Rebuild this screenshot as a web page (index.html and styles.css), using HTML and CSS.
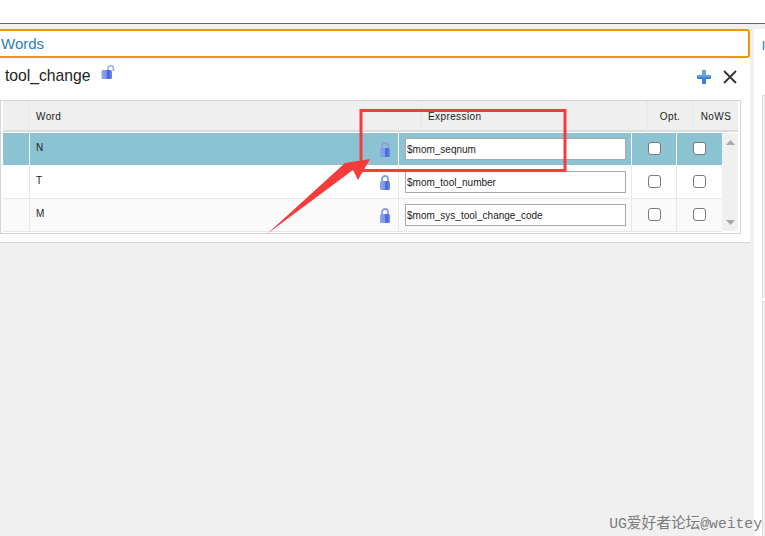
FILE: index.html
```html
<!DOCTYPE html>
<html lang="en">
<head>
<meta charset="utf-8">
<title>Words</title>
<link rel="stylesheet" href="styles.css">
</head>
<body>
<svg class="defs" width="0" height="0"><defs>
  <linearGradient id="lockfill" x1="0" x2="1" y1="0" y2="0"><stop offset="0" stop-color="#8ea4ea"/><stop offset=".45" stop-color="#7f97ea"/><stop offset=".6" stop-color="#3f63e0"/><stop offset="1" stop-color="#6f8ae4"/></linearGradient>
</defs></svg>
<div class="topbar"></div>
<div class="workspace">
  <main class="main">
    <section class="panel">
      <div class="accordion">Words</div>
      <div class="titlebar">
        <div class="title">
          <span class="title-text">tool_change</span>
          <svg class="open-lock" width="14" height="15" viewBox="0 0 14 15"><path d="M7 6V3.500a2.700 2.700 0 0 1 5.400 0V6" fill="none" stroke="#9db0e6" stroke-width="1.600"/><rect x="0.500" y="5" width="10.500" height="9" rx="1.500" fill="url(#lockfill)"/></svg>
        </div>
        <div class="actions">
          <svg width="14" height="14" viewBox="0 0 14 14"><path d="M5 0h4v5h5v4H9v5H5V9H0V5h5z" fill="#3d7fdc"/><path d="M5 0h4v5h5v2H0V5h5z" fill="#62a4ea"/></svg>
          <svg width="14" height="14" viewBox="0 0 14 14"><path d="M1 1l12 12M13 1L1 13" stroke="#333" stroke-width="1.800" fill="none"/></svg>
        </div>
      </div>
      <div class="table">
        <div class="thead">
          <div class="th th-blank"></div>
          <div class="th th-word">Word</div>
          <div class="th th-expr">Expression</div>
          <div class="th th-opt">Opt.</div>
          <div class="th th-nows">NoWS</div>
        </div>
        <div class="tbody">
          <div class="rows">
            <div class="row selected">
              <div class="cell"></div>
              <div class="cell cell-word"><span>N</span><svg class="lock" width="12" height="15" viewBox="0 0 12 15"><path d="M3 7V4a3 3 0 0 1 6 0v3" fill="none" stroke="#8a9de0" stroke-width="1.800"/><rect x="1" y="6" width="10" height="9" rx="1.500" fill="url(#lockfill)"/></svg></div>
              <div class="cell cell-expr"><input class="expr" type="text" value="$mom_seqnum"></div>
              <div class="cell cell-check"><input class="check" type="checkbox"></div>
              <div class="cell cell-check"><input class="check" type="checkbox"></div>
            </div>
            <div class="row">
              <div class="cell"></div>
              <div class="cell cell-word"><span>T</span><svg class="lock" width="12" height="15" viewBox="0 0 12 15"><path d="M3 7V4a3 3 0 0 1 6 0v3" fill="none" stroke="#8a9de0" stroke-width="1.800"/><rect x="1" y="6" width="10" height="9" rx="1.500" fill="url(#lockfill)"/></svg></div>
              <div class="cell cell-expr"><input class="expr" type="text" value="$mom_tool_number"></div>
              <div class="cell cell-check"><input class="check" type="checkbox"></div>
              <div class="cell cell-check"><input class="check" type="checkbox"></div>
            </div>
            <div class="row alt">
              <div class="cell"></div>
              <div class="cell cell-word"><span>M</span><svg class="lock" width="12" height="15" viewBox="0 0 12 15"><path d="M3 7V4a3 3 0 0 1 6 0v3" fill="none" stroke="#8a9de0" stroke-width="1.800"/><rect x="1" y="6" width="10" height="9" rx="1.500" fill="url(#lockfill)"/></svg></div>
              <div class="cell cell-expr"><input class="expr" type="text" value="$mom_sys_tool_change_code"></div>
              <div class="cell cell-check"><input class="check" type="checkbox"></div>
              <div class="cell cell-check"><input class="check" type="checkbox"></div>
            </div>
          </div>
          <div class="scrollbar">
            <svg width="9" height="5" viewBox="0 0 9 5"><path d="M4.500 0L9 5H0z" fill="#a8a8a8"/></svg>
            <svg width="9" height="5" viewBox="0 0 9 5"><path d="M4.500 5L9 0H0z" fill="#a8a8a8"/></svg>
          </div>
        </div>
      </div>
    </section>
  </main>
  <aside class="side">
    <div class="side-letter">l</div>
    <div class="side-box side-box-first"></div>
    <div class="side-box side-box-second"></div>
  </aside>
</div>
<svg class="annotation" width="765" height="536" viewBox="0 0 765 536">
  <rect x="361" y="110.500" width="204" height="60" fill="none" stroke="#f53c3c" stroke-width="3"/>
  <path d="M267 234L345 163L370 159L358 180L353 170Z" fill="#f53c3c"/>
</svg>
<div class="watermark">UG爱好者论坛@weitey</div>
</body>
</html>
```
FILE: styles.css
```css
html, body {
  margin: 0;
  padding: 0;
}
body {
  width: 765px;
  height: 536px;
  overflow: hidden;
  position: relative;
  background: #f0f0f0;
  font-family: "Liberation Sans", Arial, sans-serif;
}
.defs {
  position: absolute;
}
.topbar {
  height: 23px;
  background: #fff;
  border-bottom: 1px solid #666;
}
.workspace {
  display: flex;
  height: 512px;
  padding-top: 5px;
  box-sizing: border-box;
}
.main {
  width: 750px;
  flex: none;
}
.panel {
  background: #fff;
  height: 214px;
  box-sizing: border-box;
  border-bottom: 1px solid #d8d8d8;
}
.accordion {
  height: 29px;
  box-sizing: border-box;
  border: 2px solid #e69c00;
  border-left: 0;
  border-radius: 0 3px 3px 0;
  padding-left: 1px;
  font-size: 15px;
  line-height: 26px;
  color: #2a7fb8;
}
.titlebar {
  display: flex;
  justify-content: space-between;
  height: 42px;
  box-sizing: border-box;
}
.title {
  display: flex;
  align-items: flex-start;
  padding: 9px 0 0 5px;
  gap: 10px;
}
.title-text {
  font-size: 15.700px;
  line-height: 18px;
  color: #222;
}
.open-lock {
  margin-top: -2px;
}
.actions {
  display: flex;
  gap: 12px;
  padding: 12px 13px 0 0;
}
.table {
  width: 741px;
  height: 134px;
  box-sizing: border-box;
  border: 1px solid #d4d4d4;
  padding: 0 2px 2px 2px;
}
.thead {
  display: grid;
  grid-template-columns: 26px 393px 226px 45px 46px;
  height: 31px;
  background: #efefef;
  border-bottom: 2px solid #dcdcdc;
  box-sizing: border-box;
  font-size: 10px;
  color: #222;
}
.th {
  padding-top: 1px;
  padding-bottom: 2px;
  border-right: 1px solid #e6e6e6;
  line-height: 30px;
  letter-spacing: 0.400px;
}
.th-word {
  padding-left: 7px;
}
.th-expr {
  padding-left: 6px;
}
.th-opt,
.th-nows {
  text-align: center;
}
.th-nows {
  border-right: 0;
}
.tbody {
  display: flex;
  height: 99px;
  padding-top: 1px;
  box-sizing: border-box;
}
.rows {
  width: 719px;
}
.scrollbar {
  width: 16px;
  background: #f0f0f0;
  display: flex;
  flex-direction: column;
  justify-content: space-between;
  align-items: center;
  padding: 7px 0 6px;
  box-sizing: border-box;
}
.row {
  display: grid;
  grid-template-columns: 27px 369px 233px 45px 45px;
  height: 33px;
  box-sizing: border-box;
  background: #fff;
  border-bottom: 1px solid #e8e8e8;
  font-size: 10px;
  color: #222;
}
.row.selected {
  background: #8bc3d3;
  border-bottom-color: #fff;
}
.row.alt {
  background: #fafafa;
}
.cell {
  border-right: 1px solid #e8e8e8;
  box-sizing: border-box;
  display: flex;
  align-items: center;
}
.selected .cell {
  border-right-color: #fff;
}
.cell:last-child {
  border-right: 0;
}
.cell-word {
  justify-content: space-between;
  padding: 0 7px 0 6px;
}
.cell-word span {
  margin-top: -4px;
}
.cell-expr {
  padding-left: 6px;
}
.expr {
  width: 221px;
  height: 22px;
  box-sizing: border-box;
  border: 1px solid #a8a8a8;
  padding: 1px 2px 0 1px;
  margin: 0;
  background: #fff;
  font-family: "Liberation Sans", Arial, sans-serif;
  font-size: 10px;
  color: #222;
  outline: none;
}
.cell-check {
  justify-content: center;
}
.check {
  appearance: none;
  -webkit-appearance: none;
  width: 13px;
  height: 13px;
  margin: -1px 0 0;
  background: #fff;
  border: 1px solid #7a7a7a;
  border-radius: 3px;
  box-sizing: border-box;
}
.side {
  flex: 1;
  background: #fff;
  padding: 8px 0 0 8px;
  box-sizing: border-box;
  margin-left: 4px;
}
.side-letter {
  height: 18px;
  font-size: 13px;
  line-height: 18px;
  color: #1f6fa8;
}
.side-box {
  background: #f0f0f0;
  border-left: 1px solid #dcdcdc;
  border-top: 1px solid #dcdcdc;
  box-sizing: border-box;
}
.side-box-first {
  height: 203px;
  margin-top: 40px;
}
.side-box-second {
  height: 235px;
  margin-top: 3px;
}
.annotation {
  position: absolute;
  top: 0;
  left: 0;
  pointer-events: none;
}
.watermark {
  position: absolute;
  right: 3px;
  bottom: 4px;
  font-family: "Liberation Mono", "Noto Sans CJK SC", monospace;
  font-size: 14.700px;
  line-height: 16px;
  color: #7c7c7c;
}
```
